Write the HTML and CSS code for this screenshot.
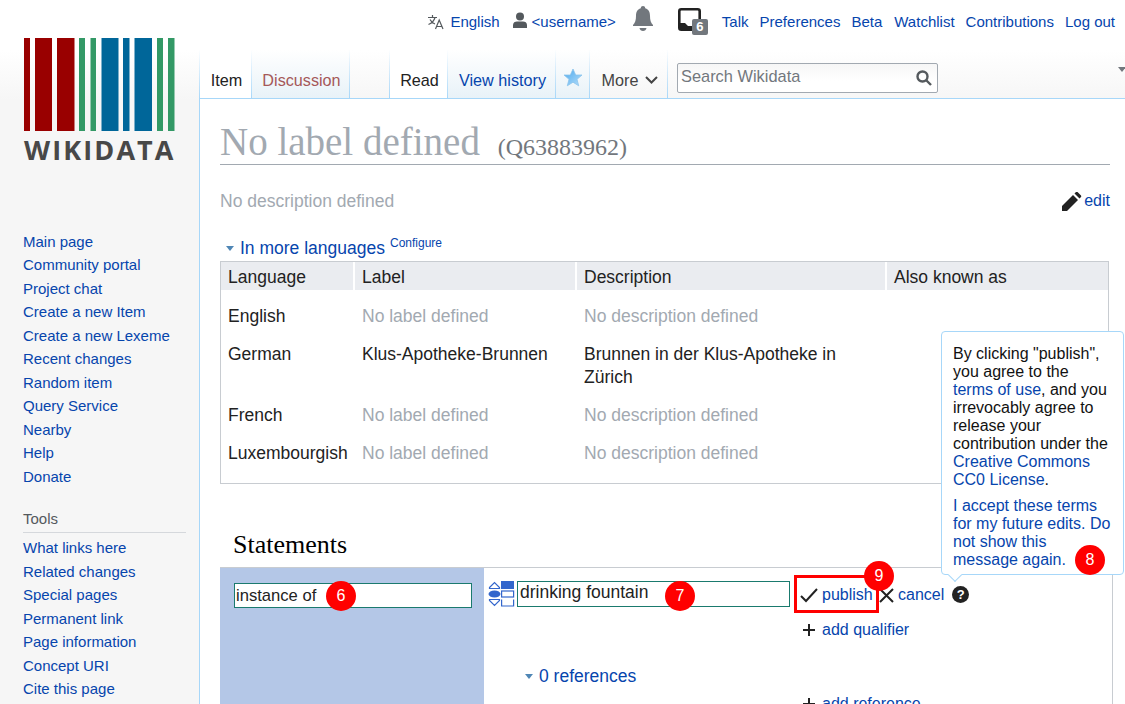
FILE: index.html
```html
<!DOCTYPE html>
<html lang="en">
<head>
  <meta charset="UTF-8" />
  <title>No label defined - Wikidata</title>
  <link rel="stylesheet" href="styles.css">
</head>
<body>
  <div class="page">
    <aside class="sidebar">
      <a class="logo" href="#">
        <svg class="logo-bars" width="151" height="93" viewBox="0 0 151 93">
          <g fill="#990000">
            <rect x="0" width="6" height="93"/><rect x="11" width="17" height="93"/><rect x="33" width="17.5" height="93"/>
          </g>
          <g fill="#339966">
            <rect x="55" width="6" height="93"/><rect x="66.5" width="5.5" height="93"/><rect x="133" width="6" height="93"/><rect x="144" width="6.5" height="93"/>
          </g>
          <g fill="#006699">
            <rect x="77.5" width="17" height="93"/><rect x="99" width="6.5" height="93"/><rect x="110.5" width="17.5" height="93"/>
          </g>
        </svg>
        <span class="logo-text">WIKIDATA</span>
      </a>
      <ul class="nav-list">
        <li><a href="#">Main page</a></li>
        <li><a href="#">Community portal</a></li>
        <li><a href="#">Project chat</a></li>
        <li><a href="#">Create a new Item</a></li>
        <li><a href="#">Create a new Lexeme</a></li>
        <li><a href="#">Recent changes</a></li>
        <li><a href="#">Random item</a></li>
        <li><a href="#">Query Service</a></li>
        <li><a href="#">Nearby</a></li>
        <li><a href="#">Help</a></li>
        <li><a href="#">Donate</a></li>
      </ul>
      <h3 class="nav-heading">Tools</h3>
      <ul class="nav-list">
        <li><a href="#">What links here</a></li>
        <li><a href="#">Related changes</a></li>
        <li><a href="#">Special pages</a></li>
        <li><a href="#">Permanent link</a></li>
        <li><a href="#">Page information</a></li>
        <li><a href="#">Concept URI</a></li>
        <li><a href="#">Cite this page</a></li>
      </ul>
    </aside>

    <div class="main">
      <nav class="personal">
        <svg class="icon-translate" width="18" height="16" viewBox="0 0 18 16" fill="none" stroke="#54595d" stroke-width="1.2">
          <path d="M1 3.5h9M5.5 1v2.5M8 3.5c-.8 3-3 5.500-6.500 7M3 5.500c1 2 2.500 3.500 5 4.500"/>
          <path d="M8.500 15l3.700-9 3.800 9M9.800 12.500h5"/>
        </svg>
        <a class="lang" href="#">English</a>
        <svg class="icon-user" width="16" height="17" viewBox="0 0 16 17" fill="#54595d">
          <circle cx="8" cy="4.500" r="4"/>
          <path d="M1 16v-3c0-2.500 2-3.500 4-3.500h6c2 0 4 1 4 3.500v3z"/>
        </svg>
        <a class="username" href="#">&lt;username&gt;</a>
        <svg class="icon-bell" width="22" height="26" viewBox="0 0 22 26" fill="#72777d">
          <path d="M11 0c1.300 0 2.200.9 2.200 2.200C17 3.200 18 6.500 18 10c0 4 .8 7 3 9v1H1v-1c2.200-2 3-5 3-9 0-3.500 1-6.800 4.800-7.800C8.800.9 9.700 0 11 0z"/>
          <path d="M7.500 22h7c-.3 1.800-1.700 3-3.500 3s-3.200-1.200-3.500-3z"/>
        </svg>
        <span class="notices">
          <svg width="23" height="23" viewBox="0 0 23 23">
            <rect x="1.300" y="1.300" width="20.400" height="20.400" rx="2" fill="none" stroke="#222" stroke-width="2.600"/>
            <path d="M2 15h5l3 3h5v4H2z" fill="#222"/>
          </svg>
          <span class="notices-count">6</span>
        </span>
        <a href="#">Talk</a>
        <a href="#">Preferences</a>
        <a class="beta" href="#">Beta</a>
        <a href="#">Watchlist</a>
        <a href="#">Contributions</a>
        <a href="#">Log out</a>
      </nav>

      <div class="tabs">
        <a class="tab selected tab-item" href="#">Item</a>
        <a class="tab new tab-discussion" href="#">Discussion</a>
        <span class="tab-spacer"></span>
        <a class="tab selected tab-read" href="#">Read</a>
        <a class="tab tab-history" href="#">View history</a>
        <span class="tab tab-star">
          <svg width="20" height="19" viewBox="0 0 20 19">
            <defs>
              <linearGradient id="starFill" x1="0" y1="0" x2="1" y2="1">
                <stop offset="0" stop-color="#4aa8ec"/>
                <stop offset="1" stop-color="#b5defb"/>
              </linearGradient>
            </defs>
            <path d="M10 1l2.700 6h6.300l-5 4.300 1.700 6.500L10 14.200l-5.700 3.600L6 11.300 1 7h6.300z" fill="url(#starFill)" stroke="#8cc4ec" stroke-width=".8"/>
          </svg>
        </span>
        <span class="tab tab-more">More
          <svg width="13" height="8" viewBox="0 0 13 8" fill="none" stroke="#444" stroke-width="2"><path d="M1 1l5.500 5.500L12 1"/></svg>
        </span>
        <div class="search">
          <span class="search-text">Search Wikidata</span>
          <svg width="16" height="16" viewBox="0 0 16 16" fill="none" stroke="#54595d" stroke-width="2.400">
            <circle cx="6.500" cy="6.500" r="5"/><path d="M10.500 10.500l4.500 4.500"/>
          </svg>
        </div>
        <span class="tabs-arrow"></span>
      </div>

      <main class="content">
        <h1 class="title">No label defined <span class="title-id">(Q63883962)</span></h1>

        <div class="description-row">
          <span class="muted">No description defined</span>
          <span class="edit">
            <svg width="20" height="19" viewBox="0 0 20 19" fill="#222">
              <path d="M0 19v-5L11 3l5 5L5 19z"/><path d="M12.500 1.500L14 0c.5-.3 1-.3 1.500 0l3.500 3.500c.3.500.3 1 0 1.500l-1.500 1.500z"/>
            </svg>
            <a href="#">edit</a>
          </span>
        </div>

        <div class="languages-toggle">
          <span class="arrow-down"></span>
          <a href="#">In more languages</a>
          <sup class="configure"><a href="#">Configure</a></sup>
        </div>

        <table class="languages">
          <thead>
            <tr><th class="col-lang">Language</th><th class="col-label">Label</th><th class="col-desc">Description</th><th>Also known as</th></tr>
          </thead>
          <tbody>
            <tr><td>English</td><td class="muted">No label defined</td><td class="muted">No description defined</td><td></td></tr>
            <tr><td>German</td><td>Klus-Apotheke-Brunnen</td><td>Brunnen in der Klus-Apotheke in Zürich</td><td></td></tr>
            <tr><td>French</td><td class="muted">No label defined</td><td class="muted">No description defined</td><td></td></tr>
            <tr><td>Luxembourgish</td><td class="muted">No label defined</td><td class="muted">No description defined</td><td></td></tr>
          </tbody>
        </table>

        <h2 class="statements-title">Statements</h2>

        <div class="statement">
          <div class="property">
            <div class="field property-field">instance of<span class="badge badge-6">6</span></div>
          </div>
          <div class="value">
            <div class="value-row">
              <svg class="rank" width="13" height="26" viewBox="0 0 13 26">
                <path d="M1.500 6.500L6.500 1.500l5 5v1h-10z" fill="none" stroke="#36c" stroke-width="1.200"/>
                <ellipse cx="6.500" cy="13" rx="6" ry="3.500" fill="#36c"/>
                <path d="M1.500 19.500v-1h10v1l-5 5z" fill="none" stroke="#36c" stroke-width="1.200"/>
              </svg>
              <svg class="snak-type" width="14" height="26" viewBox="0 0 14 26">
                <rect x="0" y="0" width="13" height="8" fill="#36c"/>
                <rect x=".6" y="10" width="12" height="6" fill="none" stroke="#36c" stroke-width="1.200"/>
                <path d="M.6 18.500v6.500h12v-6.500" fill="none" stroke="#36c" stroke-width="1.200"/>
              </svg>
              <div class="field value-field">drinking fountain<span class="badge badge-7">7</span></div>
              <div class="toolbar">
                <span class="publish">
                  <svg width="18" height="15" viewBox="0 0 18 15" fill="none" stroke="#222" stroke-width="2"><path d="M1 8l5 5L17 1"/></svg>
                  <a href="#">publish</a>
                  <span class="badge badge-9">9</span>
                </span>
                <svg class="icon-cancel" width="15" height="15" viewBox="0 0 15 15" fill="none" stroke="#222" stroke-width="2"><path d="M1 1l13 13M14 1L1 14"/></svg>
                <a class="cancel" href="#">cancel</a>
                <span class="help">?</span>
              </div>
            </div>
            <div class="add-row add-qualifier">
              <svg width="12" height="12" viewBox="0 0 12 12" stroke="#222" stroke-width="2"><path d="M6 0v12M0 6h12"/></svg>
              <a href="#">add qualifier</a>
            </div>
            <div class="references">
              <span class="arrow-down"></span>
              <a href="#">0 references</a>
            </div>
            <div class="add-row add-reference">
              <svg width="12" height="12" viewBox="0 0 12 12" stroke="#222" stroke-width="2"><path d="M6 0v12M0 6h12"/></svg>
              <a href="#">add reference</a>
            </div>
          </div>
        </div>
      </main>
    </div>

    <div class="tooltip">
      <p>By clicking "publish", you agree to the <a href="#">terms of use</a>, and you irrevocably agree to release your contribution under the <a href="#">Creative Commons CC0 License</a>.</p>
      <p class="tooltip-accept"><a href="#">I accept these terms for my future edits. Do not show this message again.</a></p>
      <span class="badge badge-8">8</span>
    </div>
  </div>
</body>
</html>
```

FILE: styles.css
```css
html, body {
  margin: 0;
  height: 704px;
  overflow: hidden;
}

body {
  font-family: "Liberation Sans", Arial, sans-serif;
  font-size: 16px;
  color: #222;
  background: #fff;
}

a {
  color: #0645ad;
  text-decoration: none;
}

svg {
  flex: none;
  display: block;
}

.page {
  position: relative;
  display: flex;
  height: 704px;
  overflow: hidden;
  background: linear-gradient(#fff 50px, #f6f6f6 100px);
}

.muted {
  color: #a2a9b1;
}

/* Sidebar */
.sidebar {
  width: 199px;
  flex: none;
  box-sizing: border-box;
  padding: 37.5px 0 0 23px;
}

.logo {
  display: block;
  width: 151px;
  height: 192px;
  margin-left: 1px;
}

.logo-text {
  display: block;
  margin-top: 7px;
  font-family: "Open Sans", "Liberation Sans", sans-serif;
  font-size: 27px;
  line-height: 24px;
  font-weight: 700;
  color: #484848;
  white-space: nowrap;
  letter-spacing: 2.1px;
}

.nav-list {
  list-style: none;
  margin: 0;
  padding: 0;
  font-size: 15px;
  line-height: 23.5px;
}

.nav-heading {
  margin: 21px 13px 3px 0;
  padding-bottom: 3px;
  border-bottom: 1px solid #d5d8dc;
  font-size: 15px;
  line-height: 20px;
  font-weight: normal;
  color: #54595d;
}

/* Top right links */
.personal {
  display: flex;
  justify-content: flex-end;
  align-items: center;
  height: 43px;
  padding-right: 10px;
  font-size: 15px;
  gap: 11px;
}

.icon-translate {
  margin-right: -6px;
}

.icon-user {
  margin: -3px -7px 0 1px;
}

.beta {
  margin-right: 1px;
}

.icon-bell {
  margin: -5px 0 0 5px;
}

.notices {
  position: relative;
  width: 30px;
  height: 27px;
  margin-left: 13px;
  margin-right: 3px;
}

.notices-count {
  position: absolute;
  right: 0;
  bottom: 0;
  width: 16px;
  height: 16px;
  border-radius: 2px;
  background: #72777d;
  color: #fff;
  font-size: 13px;
  line-height: 16px;
  font-weight: 700;
  text-align: center;
}

/* Tabs */
.tabs {
  display: flex;
  align-items: stretch;
  height: 56px;
  box-sizing: border-box;
  padding-top: 7px;
  border-bottom: 1px solid #a7d7f9;
  position: relative;
}

.tab {
  display: flex;
  align-items: center;
  justify-content: center;
  gap: 7px;
  box-sizing: border-box;
  height: 48px;
  padding: 12px 0 0 2px;
  border-right: 1px solid;
  border-image: linear-gradient(transparent, #a7d7f9) 1;
  background: linear-gradient(#fff, #e8f2f8);
  font-size: 16.2px;
  white-space: nowrap;
}

.tab.selected {
  background: #fff;
  color: #222;
}

.tab-item {
  width: 53px;
  border-left: 1px solid;
}

.tab.new {
  color: #a55858;
}

.tab-discussion {
  width: 98px;
}

.tab-spacer {
  width: 40px;
  box-sizing: border-box;
  height: 48px;
  border-right: 1px solid;
  border-image: linear-gradient(transparent, #a7d7f9) 1;
}

.tab-read {
  width: 58px;
}

.tab-history {
  width: 108px;
}

.tab-star {
  width: 34px;
  padding: 6px 0 0;
}

.tab-more {
  width: 78px;
  padding-left: 3px;
  background: linear-gradient(#fff, #f6f6f6);
  color: #444;
}

.search {
  display: flex;
  align-items: center;
  justify-content: space-between;
  box-sizing: border-box;
  width: 261px;
  height: 30px;
  margin: 13px 0 0 9px;
  padding: 0 5px 0 3px;
  border: 1px solid #a2a9b1;
  border-radius: 2px;
  background: linear-gradient(#f6f6f6, #fff 60%);
}

.search-text {
  color: #72777d;
  font-size: 16.4px;
  margin-top: -3px;
}

.tabs-arrow {
  position: absolute;
  right: -1px;
  top: 24px;
  width: 0;
  height: 0;
  border-left: 4.500px solid transparent;
  border-right: 4.500px solid transparent;
  border-top: 5px solid #72777d;
}

/* Content */
.main {
  flex: 1;
  min-width: 0;
}

.content {
  height: 605px;
  box-sizing: border-box;
  padding: 0 15px 0 20px;
  border-left: 1px solid #a7d7f9;
  background: #fff;
}

.title {
  margin: 0;
  height: 66px;
  box-sizing: border-box;
  padding-top: 22px;
  border-bottom: 1px solid #a2a9b1;
  font-family: "Liberation Serif", Georgia, serif;
  font-size: 39px;
  line-height: 42px;
  font-weight: normal;
  color: #a2a9b1;
  white-space: nowrap;
}

.title-id {
  margin-left: 8px;
  font-size: 24px;
  color: #72777d;
}

.description-row {
  display: flex;
  justify-content: space-between;
  align-items: center;
  height: 24px;
  margin-top: 24px;
  font-size: 17.5px;
}

.edit {
  display: flex;
  align-items: center;
  gap: 2px;
  font-size: 16px;
}

.languages-toggle {
  display: flex;
  align-items: center;
  margin-top: 23px;
  margin-left: 6px;
  height: 24px;
  font-size: 17.500px;
}

.arrow-down {
  width: 0;
  height: 0;
  border-left: 4.500px solid transparent;
  border-right: 4.500px solid transparent;
  border-top: 5px solid #4f86b5;
  margin-right: 6px;
  margin-top: 1px;
}

.configure {
  font-size: 12px;
  margin: -10px 0 0 5px;
  line-height: 14px;
}

.languages {
  width: 889px;
  margin-top: 1px;
  border: 1px solid #c8ccd1;
  border-spacing: 0;
  font-size: 17.5px;
  line-height: 23px;
  table-layout: fixed;
}

.languages th {
  height: 28px;
  box-sizing: border-box;
  padding: 2px 7px 0;
  background: #eaecf0;
  border-right: 2px solid #fff;
  font-weight: normal;
  text-align: left;
}

.languages th:last-child {
  border-right: none;
}

.languages td {
  padding: 7.5px 7px;
  vertical-align: top;
}

.languages tbody tr:first-child td {
  padding-top: 14.5px;
}

.languages tbody tr:last-child td {
  padding-bottom: 18.5px;
}

.languages th.col-lang {
  width: 134px;
}

.languages th.col-label {
  width: 222px;
}

.languages th.col-desc {
  width: 310px;
}

.statements-title {
  margin: 44px 0 0 13px;
  height: 39px;
  font-family: "Liberation Serif", Georgia, serif;
  font-size: 26px;
  line-height: 34px;
  font-weight: normal;
  color: #000;
}

.statement {
  display: flex;
  height: 300px;
  margin-right: -3px;
  border-top: 1px solid #c8ccd1;
  border-right: 1px solid #c8ccd1;
}

.property {
  width: 264px;
  flex: none;
  box-sizing: border-box;
  padding: 15px 12px 0 14px;
  background: #b4c7e7;
}

.field {
  position: relative;
  box-sizing: border-box;
  border: 1px solid #1a7a6e;
  background: #fff;
  color: #222;
  padding-left: 2px;
}

.property-field {
  height: 25px;
  line-height: 24px;
  padding-left: 1px;
  font-size: 16.6px;
}

.value {
  flex: 1;
  min-width: 0;
  padding-top: 13px;
}

.value-row {
  display: flex;
  align-items: flex-start;
  padding-left: 4px;
}

.value-field {
  width: 273px;
  height: 26px;
  line-height: 20px;
  margin-left: 2px;
  font-size: 17.5px;
}

.toolbar {
  display: flex;
  align-items: center;
  margin: -6px 0 0 4px;
  height: 38px;
}

.publish {
  position: relative;
  display: flex;
  align-items: center;
  gap: 4px;
  box-sizing: border-box;
  width: 85px;
  height: 38px;
  padding: 2px 0 0 3px;
  border: 3px solid #f00;
  background: #fff;
}

.icon-cancel {
  margin: 2px 4px 0 0;
}

.cancel {
  margin-top: 2px;
}

.help {
  width: 17px;
  height: 17px;
  margin: 0 0 0 8px;
  border-radius: 50%;
  background: #222;
  color: #fff;
  font-size: 13px;
  line-height: 17px;
  font-weight: 700;
  text-align: center;
}

.add-row {
  display: flex;
  align-items: center;
  gap: 7px;
  padding-left: 319px;
}

.add-qualifier {
  margin-top: 7px;
  height: 20px;
}

.references {
  display: flex;
  align-items: center;
  margin-top: 26px;
  padding-left: 41px;
  height: 20px;
  font-size: 17.500px;
}

.add-reference {
  margin-top: 8px;
  height: 20px;
}

/* Publish notice */
.tooltip {
  position: absolute;
  left: 941px;
  top: 331px;
  width: 183px;
  height: 244px;
  box-sizing: border-box;
  padding: 13px 12px 0 11px;
  border: 1px solid #a7d7f9;
  border-radius: 4px;
  background: #fff;
  font-size: 16px;
  line-height: 18px;
  color: #111;
}

.tooltip::after {
  content: "";
  position: absolute;
  left: 8px;
  bottom: -6px;
  width: 9px;
  height: 9px;
  background: #fff;
  border-right: 1px solid #a7d7f9;
  border-bottom: 1px solid #a7d7f9;
  transform: rotate(45deg);
}

.tooltip p {
  margin: 0;
}

.tooltip-accept {
  padding-top: 8px;
}

/* Numbered callouts */
.badge {
  position: absolute;
  width: 30px;
  height: 30px;
  border-radius: 50%;
  background: #f00;
  color: #fff;
  font-size: 16px;
  line-height: 30px;
  text-align: center;
}

.badge-6 {
  left: 91px;
  top: -3px;
}

.badge-7 {
  left: 147px;
  top: -1px;
}

.badge-8 {
  left: 133px;
  top: 213px;
}

.badge-9 {
  left: 67px;
  top: -17px;
}
```
